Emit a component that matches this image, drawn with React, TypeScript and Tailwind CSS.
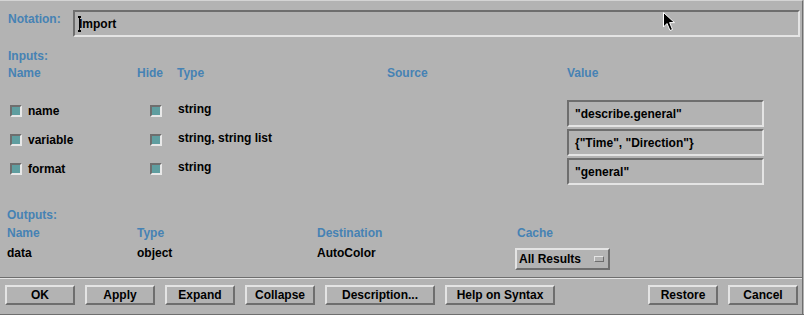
import type { ReactNode } from 'react';

const inputs = [
  { name: 'name', type: 'string', value: '"describe.general"' },
  { name: 'variable', type: 'string, string list', value: '{"Time", "Direction"}' },
  { name: 'format', type: 'string', value: '"general"' },
];

const leftButtons = [
  { label: 'OK', w: 'w-[70px]' },
  { label: 'Apply', w: 'w-[70px]' },
  { label: 'Expand', w: 'w-[70px]' },
  { label: 'Collapse', w: 'w-[70px]' },
  { label: 'Description...', w: 'w-[110px]' },
  { label: 'Help on Syntax', w: 'w-[110px]' },
];

function Label({ children, className = '' }: { children: ReactNode; className?: string }) {
  return <span className={`leading-[14px] text-[#4682b4] ${className}`}>{children}</span>;
}

function Check() {
  return (
    <span className="block h-[12px] w-[12px] border-2 border-t-[#6e6e6e] border-l-[#6e6e6e] border-b-[#e8e8e8] border-r-[#e8e8e8] bg-[#5f9ea0]" />
  );
}

function Sunken({ children, className = '' }: { children: ReactNode; className?: string }) {
  return (
    <div
      className={`flex items-center border-2 border-t-[#6e6e6e] border-l-[#6e6e6e] border-b-[#e4e4e4] border-r-[#e4e4e4] ${className}`}
    >
      {children}
    </div>
  );
}

function Button({ label, w }: { label: string; w: string }) {
  return (
    <button
      type="button"
      className={`flex h-[20px] items-center justify-center border-2 border-t-[#e4e4e4] border-l-[#e4e4e4] border-b-[#6e6e6e] border-r-[#6e6e6e] leading-[14px] ${w}`}
    >
      {label}
    </button>
  );
}

export default function App() {
  return (
    <div
      className="relative flex h-[315px] w-[804px] flex-col overflow-hidden bg-[#b3b3b3] text-[12px] font-bold text-black"
      style={{ fontFamily: '"Liberation Sans", Arial, sans-serif' }}
    >
      <div className="flex h-[314px] w-[803px] flex-col border-t border-r border-t-[#d4d4d4] border-r-[#6e6e6e]">
        {/* Notation */}
        <div className="mt-[9px] flex items-start">
          <Label className="ml-[8px] mt-[2px] w-[65px]">Notation:</Label>
          <Sunken className="h-[27px] w-[727px] pl-[4px]">
            <span className="relative leading-[14px]">
              <span className="absolute -left-[1px] -top-[1px] h-[16px] w-[3px] border-y-2 border-black">
                <span className="mx-auto block h-full w-[1px] bg-black" />
              </span>
              Import
            </span>
          </Sunken>
        </div>

        {/* Inputs */}
        <Label className="ml-[8px] mt-[12px]">Inputs:</Label>
        <div className="mt-[3px] flex leading-[14px] text-[#4682b4]">
          <span className="ml-[8px] w-[129px]">Name</span>
          <span className="w-[40px]">Hide</span>
          <span className="w-[210px]">Type</span>
          <span className="w-[180px]">Source</span>
          <span>Value</span>
        </div>

        <div className="mt-[20px] flex flex-col">
          {inputs.map((row) => (
            <div key={row.name} className="flex h-[29px] items-start">
              <div className="ml-[10px] mt-[5px]">
                <Check />
              </div>
              <span className="ml-[6px] mt-[4px] w-[122px] leading-[14px]">{row.name}</span>
              <div className="mt-[5px]">
                <Check />
              </div>
              <span className="ml-[16px] mt-[2px] w-[389px] leading-[14px]">{row.type}</span>
              <Sunken className="h-[27px] w-[197px] pl-[6px]">
                <span className="leading-[14px]">{row.value}</span>
              </Sunken>
            </div>
          ))}
        </div>

        {/* Outputs */}
        <Label className="ml-[7px] mt-[21px]">Outputs:</Label>
        <div className="mt-[4px] flex leading-[14px] text-[#4682b4]">
          <span className="ml-[7px] w-[130px]">Name</span>
          <span className="w-[180px]">Type</span>
          <span className="w-[200px]">Destination</span>
          <span>Cache</span>
        </div>
        <div className="mt-[6px] flex items-start leading-[14px]">
          <span className="ml-[7px] w-[130px]">data</span>
          <span className="w-[180px]">object</span>
          <span className="w-[198px]">AutoColor</span>
          <div className="mt-[2px] flex h-[22px] w-[95px] items-center border-2 border-t-[#e4e4e4] border-l-[#e4e4e4] border-b-[#6e6e6e] border-r-[#6e6e6e] pl-[2px]">
            <span className="w-[75px]">All Results</span>
            <span className="block h-[6px] w-[10px] border border-t-[#e4e4e4] border-l-[#e4e4e4] border-b-[#6e6e6e] border-r-[#6e6e6e]" />
          </div>
        </div>

        {/* Separator + buttons */}
        <div className="mt-[7px] border-t border-b border-t-[#6e6e6e] border-b-[#e4e4e4]" />
        <div className="mt-[6px] flex items-center pl-[5px]">
          <div className="flex gap-[10px]">
            {leftButtons.map((b) => (
              <Button key={b.label} {...b} />
            ))}
          </div>
          <div className="ml-auto mr-[4px] flex gap-[10px]">
            <Button label="Restore" w="w-[70px]" />
            <Button label="Cancel" w="w-[70px]" />
          </div>
        </div>
      </div>
      <div className="h-[1px] w-[804px] bg-[#6e6e6e]" />

      {/* mouse pointer */}
      <svg className="absolute left-[663px] top-[12px]" width="14" height="20" viewBox="0 0 14 20">
        <path
          d="M0.5 0.5 L0.5 15 L4 11.5 L7 18.5 L9.5 17.5 L6.6 10.6 L11.5 10.6 Z"
          fill="#000"
          stroke="#fff"
          strokeWidth="1"
          strokeLinejoin="miter"
        />
      </svg>
    </div>
  );
}
